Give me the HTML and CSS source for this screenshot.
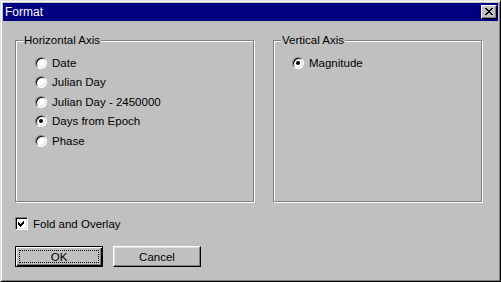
FILE: index.html
```html
<!DOCTYPE html>
<html lang="en">
<head>
  <meta charset="UTF-8">
  <title>Format</title>
  <link rel="stylesheet" href="styles.css">
</head>
<body>
  <div class="window">
    <div class="titlebar">
      <span class="title">Format</span>
      <span class="close-btn">
        <svg width="8" height="7" viewBox="0 0 8 7">
          <path d="M0 0h2v1h1v1h2v-1h1v-1h2v1h-1v1h-1v1h-1v1h1v1h1v1h1v1h-2v-1h-1v-1h-2v1h-1v1h-2v-1h1v-1h1v-1h1v-1h-1v-1h-1v-1h-1z" fill="#000"/>
        </svg>
      </span>
    </div>

    <div class="content">
      <div class="groups">
        <!-- Horizontal Axis -->
        <div class="group group-h">
          <span class="group-title">Horizontal Axis</span>
          <div class="option"><span class="radio"></span><span>Date</span></div>
          <div class="option"><span class="radio"></span><span>Julian Day</span></div>
          <div class="option"><span class="radio"></span><span>Julian Day - 2450000</span></div>
          <div class="option"><span class="radio checked"></span><span>Days from Epoch</span></div>
          <div class="option"><span class="radio"></span><span>Phase</span></div>
        </div>

        <!-- Vertical Axis -->
        <div class="group group-v">
          <span class="group-title">Vertical Axis</span>
          <div class="option"><span class="radio checked"></span><span>Magnitude</span></div>
        </div>
      </div>

      <div class="check-row">
        <span class="checkbox">
          <svg width="7" height="7" viewBox="0 0 7 7">
            <path d="M6 0v1h-1v1h-1v1h-1v1h-1v-1h-1v-1h-1v3h1v1h1v1h1v-1h1v-1h1v-1h1v-3z" fill="#000"/>
          </svg>
        </span>
        <span>Fold and Overlay</span>
      </div>

      <div class="buttons">
        <button class="btn btn-default"><span class="focus">OK</span></button>
        <button class="btn">Cancel</button>
      </div>
    </div>
  </div>
</body>
</html>
```

FILE: styles.css
```css
body {
  margin: 0;
  background-color: #c0c0c0;
  font-family: "Liberation Sans", Arial, sans-serif;
  font-size: 11.5px;
  color: #000;
}

.window {
  box-sizing: border-box;
  width: 501px;
  height: 282px;
  padding: 2px;
  border: 1px solid;
  border-color: #dfdfdf #000 #000 #dfdfdf;
  box-shadow: inset 1px 1px 0 #fff, inset -1px -1px 0 #808080;
  background-color: #c0c0c0;
}

.titlebar {
  height: 18px;
  background-color: #000080;
  color: #fff;
  display: flex;
  align-items: center;
  justify-content: space-between;
  padding-left: 2px;
}

.title {
  font-size: 12px;
  line-height: 18px;
}

.close-btn {
  box-sizing: border-box;
  width: 16px;
  height: 14px;
  margin-right: 1px;
  background-color: #c0c0c0;
  border: 1px solid;
  border-color: #fff #000 #000 #fff;
  box-shadow: inset -1px -1px 0 #808080;
  display: flex;
  align-items: center;
  justify-content: center;
  padding: 0 1px 1px 0;
}

.close-btn svg {
  display: block;
}

.content {
  padding: 19px 0 0 12px;
}

.groups {
  display: flex;
  gap: 19px;
}

.group {
  position: relative;
  box-sizing: border-box;
  height: 162px;
  border: 1px solid #808080;
  box-shadow: 1px 1px 0 #fff, inset 1px 1px 0 #fff;
  padding-top: 12px;
}

.group-h {
  width: 239px;
  padding-left: 19px;
}

.group-v {
  width: 209px;
  padding-left: 18px;
}

.group-title {
  position: absolute;
  top: -8px;
  left: 7px;
  padding: 0 1px;
  background-color: #c0c0c0;
  line-height: 15px;
}

.option {
  display: flex;
  align-items: center;
  gap: 5px;
  height: 19.5px;
}

.radio {
  box-sizing: border-box;
  width: 12px;
  height: 12px;
  border-radius: 50%;
  background-color: #fff;
  border: 1px solid;
  border-color: #808080 #fff #fff #808080;
  box-shadow: inset 1px 1px 0 #000, inset -1px -1px 0 #dfdfdf;
  display: flex;
  align-items: center;
  justify-content: center;
}

.radio.checked::after {
  content: "";
  width: 4px;
  height: 4px;
  border-radius: 50%;
  background-color: #000;
}

.check-row {
  display: flex;
  align-items: center;
  gap: 5px;
  margin-top: 15px;
  height: 13px;
}

.checkbox {
  box-sizing: border-box;
  width: 13px;
  height: 13px;
  background-color: #fff;
  border: 1px solid;
  border-color: #808080 #fff #fff #808080;
  box-shadow: inset 1px 1px 0 #000, inset -1px -1px 0 #dfdfdf;
  display: flex;
  align-items: center;
  justify-content: center;
}

.checkbox svg {
  display: block;
}

.buttons {
  display: flex;
  gap: 10px;
  margin-top: 16px;
}

.btn {
  box-sizing: border-box;
  width: 88px;
  height: 21px;
  padding: 0;
  margin: 0;
  font-family: inherit;
  font-size: 11.5px;
  color: #000;
  background-color: #c0c0c0;
  border: 1px solid;
  border-color: #fff #000 #000 #fff;
  box-shadow: inset -1px -1px 0 #808080, inset 1px 1px 0 #dfdfdf;
  display: flex;
  align-items: center;
  justify-content: center;
}

.btn-default {
  border: 1px solid #000;
  box-shadow: inset 1px 1px 0 #fff, inset -1px -1px 0 #000, inset -2px -2px 0 #808080;
  padding: 3px;
}

.focus {
  flex: 1;
  align-self: stretch;
  display: flex;
  align-items: center;
  justify-content: center;
  outline: 1px dotted #000;
  outline-offset: -1px;
}
```
